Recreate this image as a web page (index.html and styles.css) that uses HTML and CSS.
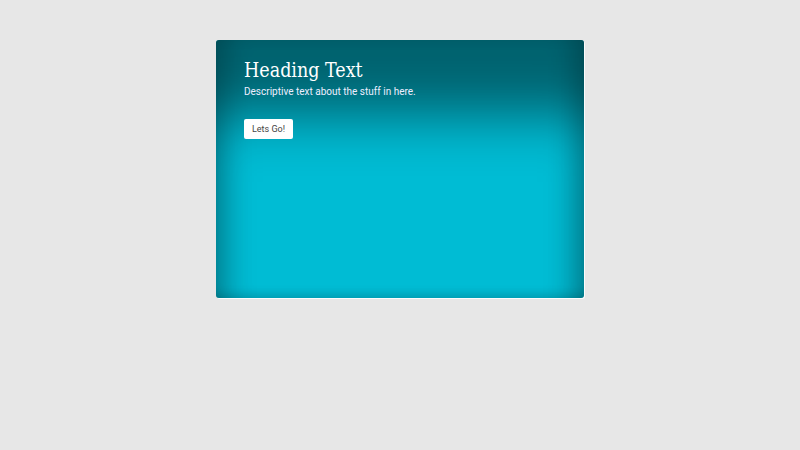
FILE: index.html
```html
<!DOCTYPE html>
<html lang="en">
<head>
    <meta charset="UTF-8">
    <meta name="viewport" content="width=device-width, initial-scale=1.0">
    <title>Card</title>
    <link rel="stylesheet" href="styles.css">
</head>
<body>
    <div class="card">
        <h1 class="card-title">Heading Text</h1>
        <p class="card-text">Descriptive text about the stuff in here.</p>
        <a href="#" class="btn">Lets Go!</a>
    </div>
</body>
</html>
```

FILE: styles.css
```css
* {
    margin: 0;
    padding: 0;
    box-sizing: border-box;
}

body {
    background: #e7e7e7;
    font-family: Roboto, 'Liberation Sans', sans-serif;
    display: flex;
    justify-content: center;
    padding-top: 40px;
    min-height: 100vh;
}

.card {
    width: 368px;
    height: 258px;
    background: #00bcd4;
    border-radius: 3px;
    padding: 19px 28px;
    color: #fff;
    /* dark band across the top, softer shade down the sides */
    box-shadow: inset 0 95px 55px -20px rgba(0, 0, 0, 0.48),
                inset 26px 0 26px -16px rgba(0, 0, 0, 0.22),
                inset -26px 0 26px -16px rgba(0, 0, 0, 0.24),
                inset 0 -10px 14px -10px rgba(0, 0, 0, 0.2),
                1px 1px 0 rgba(255, 255, 255, 0.85);
}

.card-title {
    font-family: 'DejaVu Serif', 'Liberation Serif', serif;
    font-stretch: condensed;
    font-weight: normal;
    font-size: 19.5px;
    line-height: 24px;
    margin-bottom: 2px;
}

.card-text {
    font-size: 10px;
    line-height: 14px;
    color: #eef;
    margin-bottom: 18px;
}

.btn {
    display: inline-block;
    background: #fff;
    color: #444;
    font-size: 9px;
    line-height: 20px;
    padding: 0 8px;
    border-radius: 2px;
    text-decoration: none;
}
```
